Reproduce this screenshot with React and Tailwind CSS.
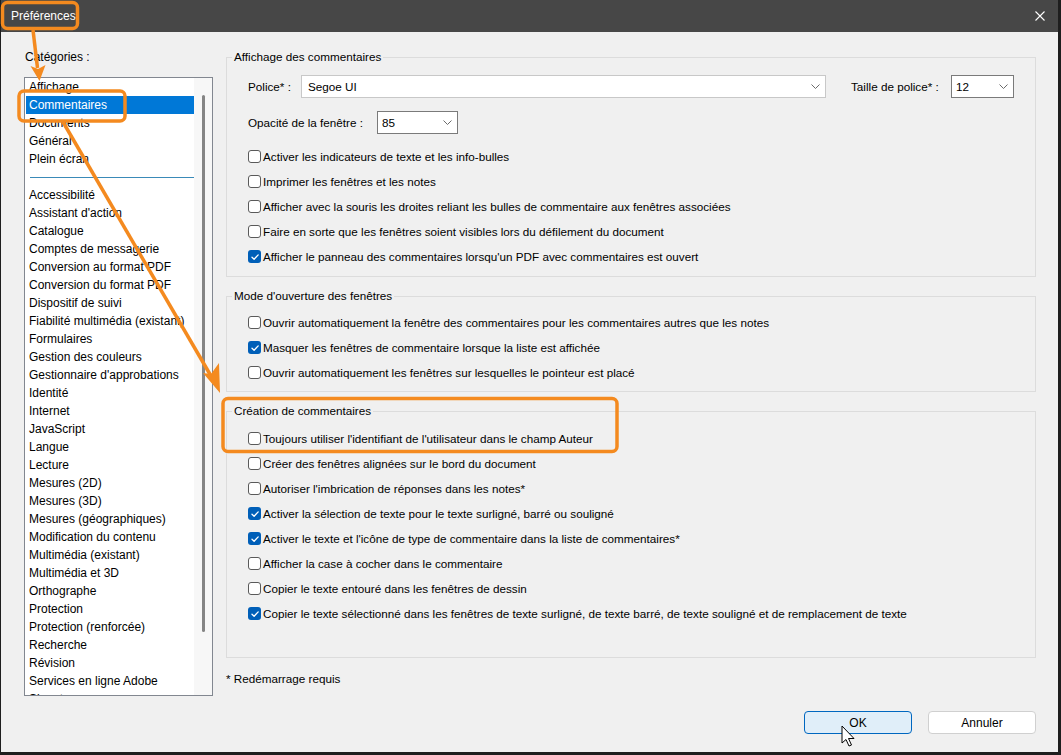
import React from 'react';

const topCategories = ['Affichage', 'Commentaires', 'Documents', 'Général', 'Plein écran'];
const otherCategories = [
  'Accessibilité',
  "Assistant d'action",
  'Catalogue',
  'Comptes de messagerie',
  'Conversion au format PDF',
  'Conversion du format PDF',
  'Dispositif de suivi',
  'Fiabilité multimédia (existant)',
  'Formulaires',
  'Gestion des couleurs',
  "Gestionnaire d'approbations",
  'Identité',
  'Internet',
  'JavaScript',
  'Langue',
  'Lecture',
  'Mesures (2D)',
  'Mesures (3D)',
  'Mesures (géographiques)',
  'Modification du contenu',
  'Multimédia (existant)',
  'Multimédia et 3D',
  'Orthographe',
  'Protection',
  'Protection (renforcée)',
  'Recherche',
  'Révision',
  'Services en ligne Adobe',
  'Signatures',
];

const displayOptions = [
  { label: 'Activer les indicateurs de texte et les info-bulles', checked: false },
  { label: 'Imprimer les fenêtres et les notes', checked: false },
  { label: 'Afficher avec la souris les droites reliant les bulles de commentaire aux fenêtres associées', checked: false },
  { label: 'Faire en sorte que les fenêtres soient visibles lors du défilement du document', checked: false },
  { label: "Afficher le panneau des commentaires lorsqu'un PDF avec commentaires est ouvert", checked: true },
];

const openOptions = [
  { label: 'Ouvrir automatiquement la fenêtre des commentaires pour les commentaires autres que les notes', checked: false },
  { label: 'Masquer les fenêtres de commentaire lorsque la liste est affichée', checked: true },
  { label: 'Ouvrir automatiquement les fenêtres sur lesquelles le pointeur est placé', checked: false },
];

const createOptions = [
  { label: "Toujours utiliser l'identifiant de l'utilisateur dans le champ Auteur", checked: false },
  { label: 'Créer des fenêtres alignées sur le bord du document', checked: false },
  { label: "Autoriser l'imbrication de réponses dans les notes*", checked: false },
  { label: 'Activer la sélection de texte pour le texte surligné, barré ou souligné', checked: true },
  { label: "Activer le texte et l'icône de type de commentaire dans la liste de commentaires*", checked: true },
  { label: 'Afficher la case à cocher dans le commentaire', checked: false },
  { label: 'Copier le texte entouré dans les fenêtres de dessin', checked: false },
  { label: 'Copier le texte sélectionné dans les fenêtres de texte surligné, de texte barré, de texte souligné et de remplacement de texte', checked: true },
];

function Checkbox({ checked, label }) {
  return (
    <div className="flex h-[25px] items-center gap-[2px]">
      {checked ? (
        <span className="flex h-[13px] w-[13px] items-center justify-center rounded-[3px] bg-[#005fb8]">
          <svg viewBox="0 0 10 10" className="h-[10px] w-[10px]">
            <path d="M2 5.2 L4.1 7.2 L8.2 2.9" fill="none" stroke="#fff" strokeWidth="1.3" strokeLinecap="round" strokeLinejoin="round" />
          </svg>
        </span>
      ) : (
        <span className="h-[13px] w-[13px] rounded-[3px] border border-[#5a5a5a] bg-white" />
      )}
      <span className="whitespace-nowrap">{label}</span>
    </div>
  );
}

function Select({ value, className, border }) {
  return (
    <div className={`flex h-[23px] items-center justify-between border bg-white pr-[5px] ${border} ${className}`}>
      <span>{value}</span>
      <svg width="9" height="5" viewBox="0 0 9 5">
        <path d="M0.5 0.5 L4.5 4.5 L8.5 0.5" fill="none" stroke="#6b6b6b" strokeWidth="1" />
      </svg>
    </div>
  );
}

function Group({ title, className, children }) {
  return (
    <fieldset className={`border border-[#dcdcdc] ${className}`}>
      <legend className="ml-[5px] px-[2px] leading-[16px]">{title}</legend>
      {children}
    </fieldset>
  );
}

function Annotations() {
  const orange = '#f48a1f';
  return (
    <svg className="pointer-events-none absolute left-0 top-0" width="1061" height="755" viewBox="0 0 1061 755">
      <rect x="2.5" y="2.5" width="75" height="26" rx="5" fill="none" stroke={orange} strokeWidth="3.5" />
      <rect x="19" y="91" width="106" height="30" rx="5" fill="none" stroke={orange} strokeWidth="3.5" />
      <rect x="223" y="398.5" width="394" height="53" rx="5" fill="none" stroke={orange} strokeWidth="3.5" />
      <line x1="33" y1="30" x2="37.5" y2="68" stroke={orange} strokeWidth="3.5" />
      <polygon points="39.5,81 30.5,66 38,69 45.5,65" fill={orange} />
      <line x1="63" y1="122" x2="211" y2="376" stroke={orange} strokeWidth="3.5" />
      <polygon points="220,393 203,373 211,374 219,363" fill={orange} />
      <path d="M842 726 L842 743 L846 739.5 L849 746 L851.5 745 L848.5 738.5 L854 738.5 Z" fill="#fff" stroke="#000" strokeWidth="1" strokeLinejoin="round" />
    </svg>
  );
}

export default function App() {
  return (
    <div className="relative flex h-[755px] w-[1061px] flex-col bg-[#1e1e1e] pb-[3px] pl-px pr-[3px] font-['Liberation_Sans',Arial,sans-serif] text-[12px] leading-[16px] text-black">
      {/* Title bar */}
      <div className="flex h-[32px] items-center justify-between bg-[#474747] pl-[10px] pr-[13px] text-white">
        <span>Préférences</span>
        <svg width="10" height="10" viewBox="0 0 10 10">
          <path d="M0.5 0.5 L9.5 9.5 M9.5 0.5 L0.5 9.5" stroke="#fff" strokeWidth="1.1" />
        </svg>
      </div>

      {/* Body */}
      <div className="flex flex-1 flex-col bg-[#f0f0f0]">
        <div className="flex pt-[17px]">
          {/* Categories */}
          <div className="ml-[23px] flex w-[189px] flex-col">
            <div className="mb-[12px] h-[16px] pl-px">Catégories :</div>
            <div className="flex h-[619px] overflow-hidden border border-[#828790] bg-white">
              <div className="flex-1 pl-px">
                {topCategories.map((c) => (
                  <div
                    key={c}
                    className={`h-[18px] whitespace-nowrap pl-[3px] leading-[18px] ${c === 'Commentaires' ? 'bg-[#0078d7] text-white' : ''}`}
                  >
                    {c}
                  </div>
                ))}
                <div className="flex h-[18px] items-center pl-[4px]">
                  <div className="h-px w-full bg-[#3a8ab8]" />
                </div>
                {otherCategories.map((c) => (
                  <div key={c} className="h-[18px] whitespace-nowrap pl-[3px] leading-[18px]">
                    {c}
                  </div>
                ))}
              </div>
              <div className="flex w-[18px] justify-center bg-[#f7f7f7] pt-[17px]">
                <div className="h-[537px] w-[3px] rounded-full bg-[#858585]" />
              </div>
            </div>
          </div>

          {/* Settings */}
          <div className="ml-[13px] flex w-[810px] flex-col text-[11.7px]">
            <Group title="Affichage des commentaires">
              <div className="pb-[7px] pl-[21px] pt-[10px]">
                <div className="flex h-[23px] items-center">
                  <span className="w-[53px]">Police* :</span>
                  <Select value="Segoe UI" className="w-[525px] pl-[6px]" border="border-[#c8c8c8]" />
                  <span className="ml-[25px] w-[100px]">Taille de police* :</span>
                  <Select value="12" className="w-[63px] pl-[4px]" border="border-[#7a7a7a]" />
                </div>
                <div className="mt-[13px] flex h-[23px] items-center">
                  <span className="w-[129px]">Opacité de la fenêtre :</span>
                  <Select value="85" className="w-[81px] pl-[4px]" border="border-[#7a7a7a]" />
                </div>
                <div className="mt-[10px]">
                  {displayOptions.map((o) => (
                    <Checkbox key={o.label} {...o} />
                  ))}
                </div>
              </div>
            </Group>

            <Group title="Mode d'ouverture des fenêtres" className="mt-[11px]">
              <div className="pb-[6px] pl-[21px] pt-[6px]">
                {openOptions.map((o) => (
                  <Checkbox key={o.label} {...o} />
                ))}
              </div>
            </Group>

            <Group title="Création de commentaires" className="mt-[11px]">
              <div className="pb-[31px] pl-[21px] pt-[7px]">
                {createOptions.map((o) => (
                  <Checkbox key={o.label} {...o} />
                ))}
              </div>
            </Group>

            <div className="mt-[13px]">* Redémarrage requis</div>
          </div>
        </div>

        {/* Buttons */}
        <div className="mt-[15px] flex justify-end gap-[16px] pr-[22px]">
          <button className="h-[23px] w-[108px] rounded-[4px] border border-[#0067c0] bg-[#e0eef9]">OK</button>
          <button className="h-[23px] w-[108px] rounded-[4px] border border-[#d0d0d0] bg-white">Annuler</button>
        </div>
      </div>

      <Annotations />
    </div>
  );
}
